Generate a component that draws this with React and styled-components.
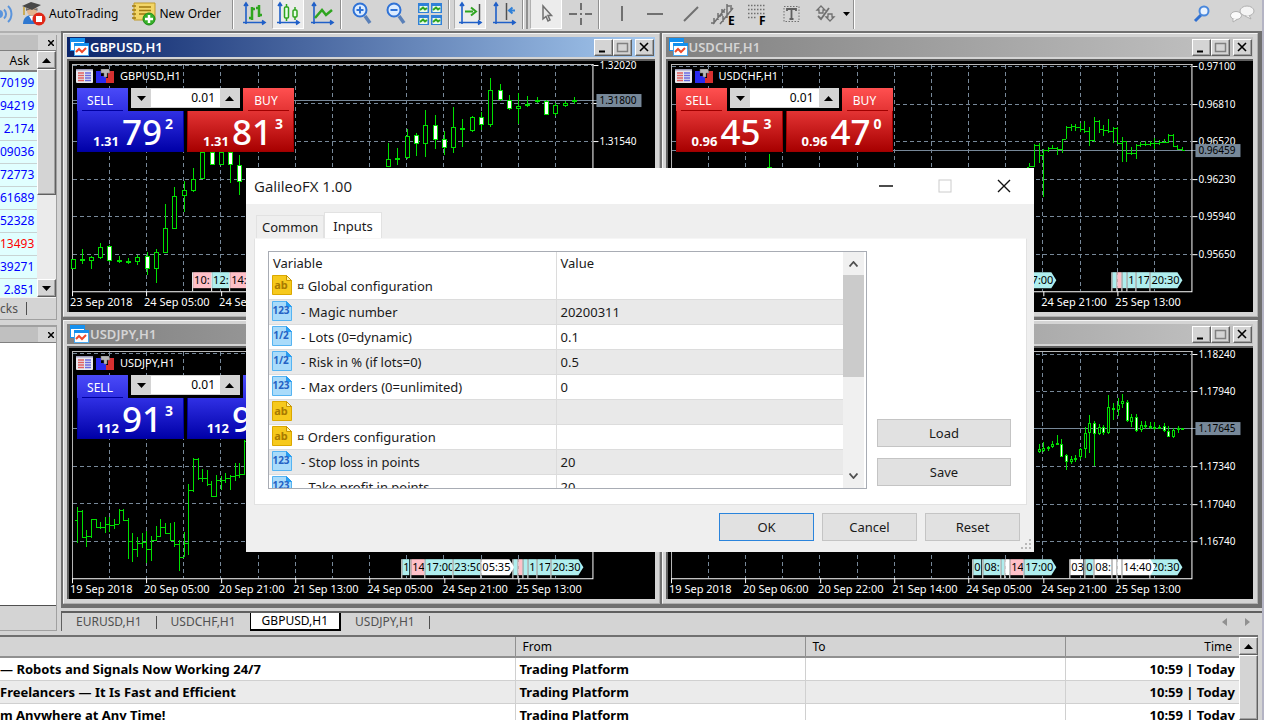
import React, { useState } from 'react';
import styled, { createGlobalStyle, css } from 'styled-components';

const UP = 'up';
const CYAN = '#afeeee';
const PINK = '#ffc0c8';
const WHITE = '#ffffff';

// [x, high, low, body top, body bottom, filled]
const GBPUSD_CANDLES = [
  [4, 198, 208, 198, 208, 0], [13, 188, 203, 198, 200, 0], [22, 195, 208, 196, 200, 0],
  [31, 182, 198, 186, 197, 0], [40, 184, 201, 185, 200, 1], [50, 195, 202, 199, 200, 0],
  [59, 197, 203, 200, 201, 0], [68, 194, 204, 196, 201, 0], [78, 191, 214, 195, 208, 1],
  [87, 188, 222, 191, 208, 0], [96, 143, 192, 167, 192, 0], [105, 126, 168, 135, 168, 0],
  [115, 120, 151, 129, 135, 0], [124, 107, 131, 118, 130, 0], [133, 91, 118, 91, 118, 0],
  [143, 91, 104, 91, 104, 1], [152, 91, 104, 91, 104, 0], [161, 91, 122, 91, 104, 1],
  [170, 94, 134, 104, 121, 1], [319, 82, 106, 98, 106, 0], [328, 87, 104, 97, 98, 0],
  [338, 68, 98, 75, 97, 0], [347, 72, 95, 74, 83, 1], [356, 49, 96, 64, 83, 0],
  [366, 54, 88, 64, 79, 1], [375, 70, 94, 78, 87, 1], [384, 46, 92, 66, 87, 0],
  [393, 58, 86, 67, 68, 0], [403, 55, 71, 56, 70, 0], [412, 51, 69, 56, 64, 1],
  [421, 17, 66, 29, 64, 0], [431, 23, 40, 29, 39, 1], [440, 34, 49, 39, 48, 1],
  [449, 32, 63, 45, 48, 0], [458, 35, 46, 43, 45, 0], [468, 36, 42, 39, 41, 0],
  [477, 39, 54, 40, 54, 1], [486, 42, 55, 44, 53, 0], [496, 40, 46, 42, 45, 0],
  [505, 36, 43, 39, 40, 0],
];

const EURUSD_CANDLES = [
  [371, 96, 105, 101, 104, 0], [375, 94, 104, 100, 103, 0], [380, 98, 103, 99, 101, 0],
  [384, 93, 100, 96, 99, 0], [389, 87, 97, 95, 96, 0], [393, 91, 109, 96, 109, 1],
  [398, 106, 122, 107, 114, 1], [403, 108, 116, 111, 114, 0], [407, 107, 114, 110, 112, 0],
  [412, 100, 111, 101, 109, 0], [417, 79, 110, 85, 101, 0], [421, 67, 105, 75, 85, 0],
  [426, 73, 118, 75, 86, 1], [431, 76, 87, 79, 86, 0], [435, 77, 87, 79, 85, 1],
  [440, 47, 86, 59, 85, 0], [445, 55, 72, 60, 62, 0], [450, 50, 68, 57, 62, 0],
  [454, 46, 60, 53, 56, 0], [459, 52, 74, 54, 73, 1], [463, 66, 79, 69, 74, 0],
  [468, 66, 84, 69, 83, 1], [473, 73, 84, 77, 82, 0], [477, 73, 81, 77, 79, 0],
  [482, 74, 81, 78, 79, 0], [486, 74, 82, 79, 80, 0], [491, 77, 81, 79, 80, 0],
  [496, 75, 84, 78, 83, 1], [500, 78, 89, 83, 89, 1], [505, 80, 90, 82, 89, 0],
  [510, 78, 85, 80, 81, 0], [514, 80, 81, 80, 81, 0],
];

// [x, high, low, close]
const USDCHF_BARS = [
  [101, 93, 106, 106], [361, 102, 106, 105], [366, 83, 106, 84], [371, 82, 102, 94],
  [375, 88, 136, 89], [380, 86, 91, 87], [384, 84, 88, 87], [389, 86, 94, 88],
  [394, 78, 92, 78], [398, 65, 78, 66], [403, 63, 70, 65], [407, 63, 70, 66],
  [412, 62, 71, 68], [416, 60, 72, 70], [421, 66, 85, 79], [426, 56, 81, 60],
  [431, 59, 72, 68], [435, 64, 75, 69], [440, 58, 72, 70], [445, 66, 82, 67],
  [449, 66, 83, 82], [454, 76, 101, 80], [458, 80, 101, 92], [463, 86, 94, 92],
  [468, 83, 98, 84], [472, 81, 86, 83], [477, 80, 85, 83], [482, 80, 85, 82],
  [486, 77, 88, 82], [491, 79, 84, 81], [496, 78, 82, 81], [500, 73, 82, 74],
  [505, 73, 86, 85], [509, 84, 89, 88], [514, 86, 89, 89],
];

const USDJPY_BARS = [
  [8, 159, 195, 163], [13, 162, 190, 189], [17, 182, 199, 188], [22, 171, 190, 171],
  [27, 171, 180, 179], [31, 174, 181, 179], [36, 169, 185, 176], [40, 169, 184, 177],
  [45, 171, 181, 176], [50, 161, 176, 162], [54, 161, 173, 172], [59, 170, 211, 193],
  [63, 185, 214, 201], [68, 189, 209, 195], [73, 185, 200, 194], [77, 183, 215, 201],
  [82, 188, 213, 192], [87, 178, 193, 188], [91, 171, 189, 179], [96, 175, 185, 185],
  [101, 175, 193, 192], [105, 174, 199, 196], [110, 192, 223, 209], [115, 184, 209, 195],
  [119, 136, 207, 142], [124, 110, 144, 111], [129, 110, 132, 130], [133, 121, 134, 130],
  [138, 122, 138, 136], [142, 133, 149, 148], [147, 127, 149, 132], [152, 128, 142, 132],
  [156, 125, 135, 130], [161, 127, 142, 128], [166, 115, 133, 127], [170, 115, 130, 126],
  [175, 92, 127, 93],
];

// [from, to, text, colour, pointed]
const TAIL_FLAGS = [
  [444, 448, '', CYAN], [449, 453, '', PINK], [454, 458, '', CYAN],
  [459, 467, '1', CYAN], [468, 481, '17', CYAN], [482, 514, '20:30', CYAN, true],
];

const CHARTS = [
  {
    symbol: 'GBPUSD,H1',
    active: true,
    sell: { tone: 'blue', base: '1.31', big: '79', pip: '2' },
    buy: { tone: 'red', base: '1.31', big: '81', pip: '3' },
    candles: GBPUSD_CANDLES,
    candleWidth: 5,
    levels: [4, 42, 80, 118, 155, 193],
    prices: ['1.32020', '1.31780', '1.31540', '', '', ''],
    last: { y: 39, text: '1.31800' },
    dates: ['23 Sep 2018', '24 Sep 05:00', '24 Sep 21:00'],
    flags: [
      [124, 142, '10:', PINK], [143, 160, '12:', CYAN], [161, 180, '14:', PINK],
    ],
  },
  {
    symbol: 'USDCHF,H1',
    sell: { tone: 'red', base: '0.96', big: '45', pip: '3' },
    buy: { tone: 'red', base: '0.96', big: '47', pip: '0' },
    bars: USDCHF_BARS,
    levels: [5, 43, 80, 118, 155, 193],
    prices: ['0.97100', '0.96810', '0.96520', '0.96230', '0.95940', '0.95650'],
    last: { y: 89, text: '0.96459' },
    dates: ['', '', '', '', '', '24 Sep 21:00', '25 Sep 13:00'],
    flags: [[356, 388, '17:00', CYAN, true], ...TAIL_FLAGS],
  },
  {
    symbol: 'USDJPY,H1',
    sell: { tone: 'blue', base: '112', big: '91', pip: '3' },
    buy: { tone: 'blue', base: '112', big: '93', pip: '1' },
    bars: USDJPY_BARS,
    levels: [5, 80, 118, 155, 193],
    prices: [],
    dates: ['19 Sep 2018', '20 Sep 05:00', '20 Sep 21:00', '21 Sep 13:00', '24 Sep 05:00', '24 Sep 21:00', '25 Sep 13:00'],
    flags: [
      [333, 340, '1', CYAN], [342, 355, '14', PINK], [356, 383, '17:00', CYAN],
      [384, 411, '23:50', CYAN], [412, 445, '05:35', WHITE, true], ...TAIL_FLAGS,
    ],
  },
  {
    symbol: 'EURUSD,H1',
    sell: { tone: 'blue', base: '1.17', big: '64', pip: '5' },
    buy: { tone: 'blue', base: '1.17', big: '66', pip: '2' },
    candles: EURUSD_CANDLES,
    candleWidth: 3,
    levels: [6, 43, 118, 156, 193],
    prices: ['1.18240', '1.17940', '1.17340', '1.17040', '1.16740'],
    last: { y: 80, text: '1.17645' },
    dates: ['19 Sep 2018', '20 Sep 06:00', '20 Sep 22:00', '21 Sep 14:00', '24 Sep 05:00', '24 Sep 21:00', '25 Sep 13:00'],
    flags: [
      [305, 313, '0', CYAN], [315, 332, '08:', CYAN], [333, 336, '', CYAN], [337, 341, '', WHITE],
      [342, 355, '14', PINK], [356, 388, '17:00', CYAN, true], [402, 415, '03', WHITE],
      [417, 425, '0', CYAN], [426, 443, '08:', WHITE], [444, 448, '', WHITE], [449, 453, '', WHITE],
      [482, 514, '20:30', CYAN, true], [454, 487, '14:40', WHITE, true],
    ],
  },
];

const ASKS = ['70199', '94219', '2.174', '09036', '72773', '61689', '52328', '13493', '39271', '2.851'];

const INPUTS = [
  { type: 'ab', name: '¤ Global configuration', value: '', section: true },
  { type: '123', name: '- Magic number', value: '20200311' },
  { type: '1/2', name: '- Lots (0=dynamic)', value: '0.1' },
  { type: '1/2', name: '- Risk in % (if lots=0)', value: '0.5' },
  { type: '123', name: '- Max orders (0=unlimited)', value: '0' },
  { type: 'ab', name: '', value: '', section: true },
  { type: 'ab', name: '¤ Orders configuration', value: '', section: true },
  { type: '123', name: '- Stop loss in points', value: '20' },
  { type: '123', name: '- Take profit in points', value: '20' },
];

const NEWS = [
  '— Robots and Signals Now Working 24/7',
  'Freelancers — It Is Fast and Efficient',
  'm Anywhere at Any Time!',
];

const GRID_X = Array.from({ length: 13 }, (_, i) => Math.round(40 + i * 37.15));

const Flag = ({ from, to, text, color, pointed }) => {
  const end = pointed ? to - 5 : to;
  const shape = pointed
    ? `M${from} 211H${end}L${to} 219L${end} 227H${from}Z`
    : `M${from} 211H${to}V227H${from}Z`;
  return (
    <g>
      <path d={shape} fill={color} />
      <path d={`M${from - 0.5} 211V230`} stroke="#fff" />
      {text && <text x={from + 1} y="223" fontSize="11" fill="#000">{text}</text>}
    </g>
  );
};

const Plot = ({ chart }) => {
  const { candles, candleWidth, bars, levels, prices, last, dates, flags } = chart;
  return (
    <PlotSvg viewBox="0 0 585 251" role="img" aria-label={`${chart.symbol} chart`}>
      <g stroke="#778899" strokeDasharray="4 3" shapeRendering="crispEdges">
        {GRID_X.map((x) => <path key={x} d={`M${x + 0.5} 4V230`} />)}
        {levels.map((y) => <path key={y} d={`M4 ${y + 0.5}H523`} />)}
      </g>
      {last && <path d={`M4 ${last.y + 0.5}H530`} stroke="#778899" />}
      <path d="M3.500 230V3.500H524" fill="none" stroke="#b8b8b8" />
      <path d="M3 230.500H523.500V3" fill="none" stroke="#fff" />
      <g stroke="#00e000" shapeRendering="crispEdges">
        {candles && candles.map(([x, high, low, top, bottom, filled]) => (
          <g key={x}>
            <path d={`M${x + 0.5} ${high}V${low}`} />
            <rect
              x={x + 0.5 - (candleWidth - 1) / 2}
              y={top + 0.5}
              width={candleWidth - 1}
              height={Math.max(bottom - top - 1, 1)}
              fill={filled ? '#fff' : '#000'}
            />
          </g>
        ))}
        {bars && bars.map(([x, high, low, close], i) => {
          const open = i ? bars[i - 1][3] : close + 9;
          const from = Math.min(Math.max(open, high), low);
          return <path key={x} d={`M${x + 0.5} ${high}V${low}M${x - 2} ${from}H${x}M${x} ${close}H${x + 3}`} />;
        })}
      </g>
      {flags.map(([from, to, text, color, pointed]) => (
        <Flag key={from} from={from} to={to} text={text} color={color} pointed={pointed} />
      ))}
      <g fill="#fff" fontSize="10">
        {levels.map((y, i) => prices[i] && (
          <g key={y}>
            <path d={`M524 ${y + 0.5}h5`} stroke="#fff" />
            <text x="530" y={y + 4}>{prices[i]}</text>
          </g>
        ))}
      </g>
      {last && (
        <g fontSize="10">
          <rect x="527" y={last.y - 6} width="45" height="13" fill="#778899" />
          <text x="530" y={last.y + 4} fill="#000">{last.text}</text>
        </g>
      )}
      <g fill="#fff" fontSize="11">
        {dates.map((date, i) => date && (
          <g key={date}>
            <path d={`M${Math.round(3 + i * 74.3) + 0.5} 230v5`} stroke="#fff" />
            <text x={Math.round(1 + i * 74.3)} y="245">{date}</text>
          </g>
        ))}
      </g>
    </PlotSvg>
  );
};

const ChartLogo = () => (
  <svg width="19" height="19" viewBox="0 0 19 19">
    <rect x="0.5" y="0.5" width="14" height="12" fill="#fff" stroke="#1590ee" />
    <path d="M0 2H15" stroke="#1590ee" strokeWidth="4" />
    <rect x="4.5" y="5.5" width="14" height="12" fill="#fff" stroke="#4aa8f0" />
    <path d="M4 6.500H19" stroke="#1590ee" strokeWidth="3" />
    <path d="M6 14L9 11L12 14L16 10" fill="none" stroke="#ef4a2c" strokeWidth="2" />
  </svg>
);

const DepthIcon = () => (
  <svg width="17" height="14" viewBox="0 0 17 14">
    <rect width="17" height="14" rx="1" fill="#e8e8ee" />
    <path d="M0 0.500H17" stroke="#9a9ab8" strokeWidth="2" />
    <path d="M2 4H8M2 6.500H8M2 9H8M2 11.500H8" stroke="#e06060" strokeWidth="1.500" />
    <path d="M9 4H15M9 6.500H15M9 9H15M9 11.500H15" stroke="#6a6ae0" strokeWidth="1.500" />
  </svg>
);

const TradeIcon = () => (
  <svg width="18" height="14" viewBox="0 0 18 14">
    <path d="M0 2H5V7H10V14H0Z" fill="#2a2af0" />
    <path d="M12 2H18V14H10V9H12Z" fill="#d83030" />
    <path d="M5 0H13L14 4H11V8H8V4H5Z" fill="#b8b8b8" stroke="#707070" strokeWidth="0.500" />
  </svg>
);

const Caption = ({ symbol }) => (
  <WindowButtons>
    <CaptionButton aria-label={`Minimize ${symbol}`}>
      <svg width="17" height="15"><path d="M4 11.500H10" stroke="#000" strokeWidth="2" /></svg>
    </CaptionButton>
    <CaptionButton aria-label={`Maximize ${symbol}`}>
      <svg width="17" height="15"><path d="M3 3.500H14M3.500 3V11.500H13.500V3" fill="none" stroke="#808080" strokeWidth="1.500" /></svg>
    </CaptionButton>
    <CaptionButton $apart aria-label={`Close ${symbol}`}>
      <svg width="17" height="15"><path d="M4 3L12 11M12 3L4 11" stroke="#000" strokeWidth="1.600" /></svg>
    </CaptionButton>
  </WindowButtons>
);

const Arrow = ({ dir }) => (
  <svg width="9" height="5" viewBox="0 0 9 5">
    <path d={dir === UP ? 'M0 5L4.500 0L9 5Z' : 'M0 0L4.500 5L9 0Z'} fill="#000" />
  </svg>
);

const QuickTrade = ({ symbol, sell, buy }) => {
  const [lots, setLots] = useState('0.01');
  return (
    <TradePanel>
      <TradeTop>
        <SideButton $tone={sell.tone}>SELL</SideButton>
        <Stepper>
          <StepButton aria-label="Less"><Arrow /></StepButton>
          <LotsInput aria-label={`${symbol} volume`} value={lots} onChange={(e) => setLots(e.target.value)} />
          <StepButton aria-label="More"><Arrow dir={UP} /></StepButton>
        </Stepper>
        <SideButton $tone={buy.tone}>BUY</SideButton>
      </TradeTop>
      <TradePrices>
        {[sell, buy].map((side, i) => (
          <PriceBox key={i} $tone={side.tone}>
            <BasePrice>{side.base}</BasePrice>
            <BigPrice>{side.big}</BigPrice>
            <PipPrice>{side.pip}</PipPrice>
          </PriceBox>
        ))}
      </TradePrices>
    </TradePanel>
  );
};

const ChartWindow = ({ chart }) => (
  <Window>
    <WindowTitle $active={chart.active}>
      <ChartLogo />
      <WindowName>{chart.symbol}</WindowName>
      <Caption symbol={chart.symbol} />
    </WindowTitle>
    <ChartArea>
      <Plot chart={chart} />
      <ChartHead>
        <DepthIcon />
        <TradeIcon />
        <ChartSymbol>{chart.symbol}</ChartSymbol>
      </ChartHead>
      <QuickTrade symbol={chart.symbol} sell={chart.sell} buy={chart.buy} />
    </ChartArea>
  </Window>
);

/* toolbar drawings, all on a 26x26 canvas */
const Axes = () => (
  <path d="M5 3V23M2 21.500H23M3 5L5 2L7 5M21 19.500L24 21.500L21 23.500" fill="none" stroke="#1f5fc8" strokeWidth="1.600" />
);

const TOOL_ICONS = {
  signals: (
    <g fill="none" stroke="#5a94dc" strokeWidth="2">
      <circle cx="12" cy="13" r="3" fill="#5a94dc" />
      <path d="M17 8.500A6 6 0 0 1 17 17.500M21 5A11 11 0 0 1 21 21" />
    </g>
  ),
  bars: (
    <g>
      <Axes />
      <path d="M11 6V19M8 17H11M11 8H14M18 4V16M15 7H18M18 14H21" stroke="#2fa51f" strokeWidth="2.500" />
    </g>
  ),
  candles: (
    <g>
      <Axes />
      <path d="M11.500 3V20M20 6V19" stroke="#2fa51f" strokeWidth="1.500" />
      <rect x="9.500" y="6" width="4" height="11" rx="1" fill="#eaffea" stroke="#2fa51f" strokeWidth="1.500" />
      <rect x="18" y="9" width="4" height="7" rx="1" fill="#eaffea" stroke="#2fa51f" strokeWidth="1.500" />
    </g>
  ),
  line: (
    <g>
      <Axes />
      <path d="M6 17L13 9L17 14L23 9" fill="none" stroke="#2fa51f" strokeWidth="2.500" />
    </g>
  ),
  zoomIn: (
    <g fill="none" stroke="#2f72d6">
      <circle cx="11" cy="9" r="6.500" fill="#dcecff" strokeWidth="2" />
      <path d="M16 15L21 22" stroke="#5a80b8" strokeWidth="3.500" />
      <path d="M7.500 9H14.500M11 5.500V12.500" strokeWidth="2" />
    </g>
  ),
  zoomOut: (
    <g fill="none" stroke="#2f72d6">
      <circle cx="11" cy="9" r="6.500" fill="#dcecff" strokeWidth="2" />
      <path d="M16 15L21 22" stroke="#5a80b8" strokeWidth="3.500" />
      <path d="M7.500 9H14.500" strokeWidth="2" />
    </g>
  ),
  tile: (
    <g>
      <path d="M1 2H12V12H1ZM14 2H25V12H14ZM1 14H12V24H1ZM14 14H25V24H14Z" fill="#2f80d8" />
      <path d="M2.500 5H10.500V11H2.500ZM15.500 5H23.500V11H15.500ZM2.500 17H10.500V23H2.500ZM15.500 17H23.500V23H15.500Z" fill="#eafaea" />
      <path d="M3 9L6 6.500L8 8.500L10 7M16 9L19 6.500L21 8.500L23 7M3 21L6 18.500L8 20.500L10 19M16 21L19 18.500L21 20.500L23 19" fill="none" stroke="#2fa51f" strokeWidth="2" />
    </g>
  ),
  autoScroll: (
    <g>
      <Axes />
      <path d="M22.500 3V19" stroke="#505050" strokeWidth="1.500" />
      <path d="M8 10.500H16M14 6.500L19 10.500L14 14.500" fill="none" stroke="#2fa51f" strokeWidth="2" />
    </g>
  ),
  shift: (
    <g>
      <Axes />
      <path d="M15.500 2V19" stroke="#505050" strokeWidth="1.500" />
      <path d="M24 9.500H19M21.500 6.500L18 9.500L21.500 12.500" fill="none" stroke="#2f80d8" strokeWidth="2" />
    </g>
  ),
  cursor: <path d="M10 5V18L13 15.500L15 20L17 19L15 14.500H18.500Z" fill="#e8e8e8" stroke="#707070" strokeWidth="1.500" />,
  cross: <path d="M14 2V9M14 12V14M14 17V24M2 13H10M13 13H15M18 13H25" stroke="#707070" strokeWidth="2" />,
  vline: <path d="M15 5V20" stroke="#707070" strokeWidth="2" />,
  hline: <path d="M6 13H22" stroke="#707070" strokeWidth="2" />,
  trend: <path d="M9 20L23 6" stroke="#707070" strokeWidth="2" />,
  equi: (
    <g>
      <path d="M4 23L16 8M11 23L24 7M5 17V23M9 12V19M13 8V15M18 3V12M14 15V21M18 10V17M22 4V10M2 22H5M9 15H12M13 11H16M18 5H21" stroke="#707070" strokeWidth="1.500" />
      <text x="19" y="24" fontSize="12" fontWeight="700" fill="#000">E</text>
    </g>
  ),
  fib: (
    <g>
      <path d="M5 4.500H22M5 8.500H22M5 12.500H22M5 16.500H14" stroke="#707070" strokeWidth="1.500" strokeDasharray="1.500 1.500" />
      <text x="16" y="24" fontSize="12" fontWeight="700" fill="#000">F</text>
    </g>
  ),
  text: (
    <g>
      <rect x="7" y="5.500" width="15" height="15" fill="none" stroke="#707070" strokeDasharray="1.500 1.500" />
      <path d="M10 10V8H19V10M14.500 8V18M12.500 18H16.500" fill="none" stroke="#606060" strokeWidth="1.800" />
    </g>
  ),
  arrows: (
    <g fill="none" stroke="#707070" strokeWidth="1.300">
      <path d="M10 5L14 9H12V12H8V9H6ZM19 20L23 16H21V13H17V16H15Z" />
      <path d="M7 15L10 18L18 7" strokeWidth="1.800" />
    </g>
  ),
};

const Tool = ({ icon, pressed, narrow }) => (
  <ToolButton $pressed={pressed} $narrow={narrow} aria-label={icon} aria-pressed={!!pressed}>
    <svg width="26" height="26" viewBox="0 0 26 26">{TOOL_ICONS[icon]}</svg>
  </ToolButton>
);

const RobotIcon = () => (
  <svg width="24" height="24" viewBox="0 0 24 24">
    <path d="M1 22C1 16 5 13 10 13S19 16 19 22Z" fill="#2f78d0" />
    <path d="M7 14L10 19L13 14Z" fill="#fff" />
    <circle cx="10" cy="9" r="5" fill="#e2b58e" />
    <path d="M0 4L9 0L19 3L10 8Z" fill="#484848" />
    <path d="M4 6V9C7 7 13 7 15.500 9V6L10 8Z" fill="#707070" />
    <path d="M2 5V13" stroke="#c8a030" strokeWidth="1.500" />
    <circle cx="17" cy="17" r="6.500" fill="#e02818" />
    <rect x="14" y="14" width="6" height="6" fill="#fff" />
  </svg>
);

const OrderIcon = () => (
  <svg width="24" height="24" viewBox="0 0 24 24">
    <path d="M2 1H23V18H2Z" fill="#f3d668" stroke="#c09a28" />
    <path d="M0 4H4M0 8H4M0 12H4M0 16H4" stroke="#a07a10" strokeWidth="1.500" />
    <path d="M7 5H19M7 8.500H19M7 12H14" stroke="#a07a10" strokeWidth="1.500" />
    <circle cx="17" cy="17" r="6" fill="#36b028" stroke="#1f8a18" />
    <path d="M13 17H21M17 13V21" stroke="#fff" strokeWidth="2.500" />
  </svg>
);

const Toolbar = () => (
  <ToolbarRow>
    <Tool icon="signals" narrow />
    <TextTool><RobotIcon />AutoTrading</TextTool>
    <TextTool $last><OrderIcon />New Order</TextTool>
    <ToolSeparator />
    <Tool icon="bars" />
    <Tool icon="candles" pressed />
    <Tool icon="line" />
    <ToolSeparator />
    <Tool icon="zoomIn" />
    <Tool icon="zoomOut" />
    <Tool icon="tile" />
    <ToolSeparator />
    <Tool icon="autoScroll" pressed />
    <Tool icon="shift" />
    <ToolSeparator $double />
    <Tool icon="cursor" pressed />
    <Tool icon="cross" />
    <ToolSeparator />
    <Tool icon="vline" />
    <Tool icon="hline" />
    <Tool icon="trend" />
    <Tool icon="equi" />
    <Tool icon="fib" />
    <Tool icon="text" />
    <Tool icon="arrows" />
    <Caret aria-label="More objects">
      <svg width="7" height="4"><path d="M0 0H7L3.500 4Z" /></svg>
    </Caret>
    <ToolSeparator />
    <ToolbarEnd>
      <Caret aria-label="Search">
        <svg width="18" height="18" viewBox="0 0 18 18">
          <path d="M2 16L8 10" stroke="#2f6fd0" strokeWidth="3" />
          <circle cx="11" cy="6" r="4.500" fill="#eaf3ff" stroke="#4a88dc" strokeWidth="2" />
        </svg>
      </Caret>
      <Caret aria-label="Chat">
        <svg width="26" height="18" viewBox="0 0 26 18">
          <ellipse cx="18" cy="6" rx="7" ry="5" fill="#f4f4f4" stroke="#b0b0b0" />
          <path d="M20 10L22 14L16 11" fill="#f4f4f4" stroke="#b0b0b0" />
          <ellipse cx="7" cy="10.500" rx="5.500" ry="4" fill="#fafafa" stroke="#b0b0b0" />
          <path d="M4 13.500V17L8 14.500" fill="#fafafa" stroke="#b0b0b0" />
        </svg>
      </Caret>
    </ToolbarEnd>
  </ToolbarRow>
);

const DockHeader = ({ label }) => (
  <DockTitle>
    <DockClose aria-label={`Close ${label}`}>
      <svg width="6" height="6"><path d="M0 0L6 6M6 0L0 6" stroke="#000" strokeWidth="1.500" /></svg>
    </DockClose>
  </DockTitle>
);

const MarketWatch = () => (
  <Dock>
    <DockHeader label="Market Watch" />
    <DockBody>
      <AskClip>
        <AskTable>
          <thead><tr><th>Ask</th></tr></thead>
          <tbody>
            {ASKS.map((ask) => (
              <tr key={ask}><AskCell $down={ask === '13493'}>{ask}</AskCell></tr>
            ))}
          </tbody>
        </AskTable>
      </AskClip>
      <ClassicScroll>
        <ScrollButton aria-label="Scroll up"><Arrow dir={UP} /></ScrollButton>
        <ScrollThumb />
        <ScrollRest />
        <ScrollButton aria-label="Scroll down"><Arrow /></ScrollButton>
      </ClassicScroll>
    </DockBody>
    <DockTabs><span>cks</span><TabBar /></DockTabs>
  </Dock>
);

const Navigator = () => (
  <Dock $fill>
    <DockHeader label="Navigator" />
    <NavigatorBody />
    <DockFoot />
  </Dock>
);

const ChartTabs = () => (
  <TabStrip>
    <ChartTab>EURUSD,H1</ChartTab>
    <TabBar />
    <ChartTab>USDCHF,H1</ChartTab>
    <ChartTab $active>GBPUSD,H1</ChartTab>
    <ChartTab>USDJPY,H1</ChartTab>
    <TabBar />
    <TabArrows>
      <svg width="5" height="8"><path d="M5 0V8L0 4Z" fill="#909090" /></svg>
      <svg width="5" height="8"><path d="M0 0V8L5 4Z" fill="#909090" /></svg>
    </TabArrows>
  </TabStrip>
);

const Mailbox = () => (
  <MailArea>
    <MailTable>
      <colgroup>
        <col />
        <FromCol />
        <ToCol />
        <TimeCol />
      </colgroup>
      <thead>
        <tr><th aria-label="Subject" /><th>From</th><th>To</th><th>Time</th></tr>
      </thead>
      <tbody>
        {NEWS.map((subject) => (
          <tr key={subject}>
            <td>{subject}</td>
            <td>Trading Platform</td>
            <td />
            <td>10:59 | Today</td>
          </tr>
        ))}
      </tbody>
    </MailTable>
    <ClassicScroll>
      <ScrollButton aria-label="Scroll up"><Arrow dir={UP} /></ScrollButton>
      <ScrollThumb />
    </ClassicScroll>
  </MailArea>
);

const TypeIcon = ({ type }) => {
  const gold = type === 'ab';
  return (
    <svg width="22" height="22" viewBox="0 0 22 22">
      <path
        d="M1.500 0.500H15.500L20.500 5.500V19.500H1.500Z"
        fill={gold ? '#f6c91c' : '#a9dbfa'}
        stroke={gold ? '#dba800' : '#55b4f2'}
      />
      <path d="M15.500 0.500V5.500H20.500Z" fill={gold ? '#fff0a0' : '#2a9df0'} stroke={gold ? '#c89600' : '#2a9df0'} />
      <text x="10" y={gold ? 14 : 13} fontSize={gold ? 11 : 10} fontWeight="700" textAnchor="middle" fill={gold ? '#a87a00' : '#2462c4'}>
        {type}
      </text>
    </svg>
  );
};

const InputsDialog = () => {
  const [tab, setTab] = useState('Inputs');
  return (
    <Overlay>
      <Dialog role="dialog" aria-labelledby="dialog-title">
        <DialogTitle>
          <h1 id="dialog-title">GalileoFX 1.00</h1>
          <DialogControl aria-label="Minimize">
            <svg width="14" height="14"><path d="M0 7H14" stroke="#111" strokeWidth="1.500" /></svg>
          </DialogControl>
          <DialogControl aria-label="Maximize" disabled>
            <svg width="14" height="14"><rect x="1" y="1" width="12" height="12" fill="none" stroke="#ccc" /></svg>
          </DialogControl>
          <DialogControl aria-label="Close">
            <svg width="14" height="14"><path d="M1 1L13 13M13 1L1 13" stroke="#111" strokeWidth="1.400" /></svg>
          </DialogControl>
        </DialogTitle>
        <DialogBody>
          <DialogTabs role="tablist">
            {['Common', 'Inputs'].map((name) => (
              <DialogTab key={name} role="tab" aria-selected={tab === name} $active={tab === name} onClick={() => setTab(name)}>
                {name}
              </DialogTab>
            ))}
          </DialogTabs>
          <DialogPanel>
            <ListBox>
              <InputTable>
                <colgroup><VariableCol /><col /></colgroup>
                <thead>
                  <tr><th>Variable</th><th>Value</th></tr>
                </thead>
                <tbody>
                  {INPUTS.map(({ type, name, value, section }, i) => (
                    <tr key={i}>
                      <td>
                        <VariableName $section={section}>
                          <TypeIcon type={type} />
                          <span>{name}</span>
                        </VariableName>
                      </td>
                      <td>{value}</td>
                    </tr>
                  ))}
                </tbody>
              </InputTable>
              <FlatScroll>
                <FlatArrow aria-label="Scroll up">
                  <svg width="9" height="6"><path d="M0.500 5.500L4.500 1L8.500 5.500" fill="none" stroke="#505050" strokeWidth="1.800" /></svg>
                </FlatArrow>
                <FlatThumb />
                <FlatArrow aria-label="Scroll down">
                  <svg width="9" height="6"><path d="M0.500 0.500L4.500 5L8.500 0.500" fill="none" stroke="#505050" strokeWidth="1.800" /></svg>
                </FlatArrow>
              </FlatScroll>
            </ListBox>
            <SideActions>
              <FlatButton>Load</FlatButton>
              <FlatButton>Save</FlatButton>
            </SideActions>
          </DialogPanel>
          <DialogFooter>
            <FooterButton $primary>OK</FooterButton>
            <FooterButton>Cancel</FooterButton>
            <FooterButton>Reset</FooterButton>
          </DialogFooter>
        </DialogBody>
        <Grip width="11" height="11" viewBox="0 0 11 11">
          <path d="M8 0H10V2H8ZM4 4H6V6H4ZM8 4H10V6H8ZM0 8H2V10H0ZM4 8H6V10H4ZM8 8H10V10H8Z" fill="#b8b8b8" />
        </Grip>
      </Dialog>
    </Overlay>
  );
};

const App = () => (
  <>
    <GlobalStyle />
    <Terminal>
      <Toolbar />
      <Main>
        <Docks>
          <MarketWatch />
          <Navigator />
        </Docks>
        <Desk>
          <Workspace>
            {CHARTS.map((chart) => <ChartWindow key={chart.symbol} chart={chart} />)}
          </Workspace>
          <ChartTabs />
        </Desk>
      </Main>
      <Mailbox />
    </Terminal>
    <InputsDialog />
  </>
);

const GlobalStyle = createGlobalStyle`
  * {
    box-sizing: border-box;
  }

  body {
    margin: 0;
    background: #fff;
    color: #000;
    font: 12px/16px "Noto Sans", "Open Sans", sans-serif;
    overflow: hidden;
  }

  button, input {
    font: inherit;
    color: inherit;
    border: 0;
    padding: 0;
    margin: 0;
    background: none;
    border-radius: 0;
  }

  svg {
    display: block;
    flex-shrink: 0;
  }
`;

const raised = css`
  background: #d4d4d4;
  border: 1px solid;
  border-color: #fff #606060 #606060 #fff;
  box-shadow: inset -1px -1px 0 #a0a0a0;
`;

const Terminal = styled.div`
  height: 100vh;
  margin-right: 16px;
  border-right: 2px solid #b4b4c4;
  background: #d4d4d4;
  display: flex;
  flex-direction: column;
  overflow: hidden;
`;

const ToolbarRow = styled.div`
  display: flex;
  align-items: center;
  gap: 2px;
  height: 31px;
  flex-shrink: 0;
  padding-bottom: 4px;
  overflow: hidden;
`;

const ToolButton = styled.button`
  width: ${({ $narrow }) => ($narrow ? '14px' : '32px')};
  height: 30px;
  display: flex;
  align-items: center;
  justify-content: ${({ $narrow }) => ($narrow ? 'flex-end' : 'center')};
  flex-shrink: 0;
  border: 1px solid transparent;
  ${({ $pressed }) => $pressed && css`
    background: #ececec;
    border-color: #b0b0b0 #fff #fff #b0b0b0;
  `}
`;

const TextTool = styled.button`
  display: flex;
  align-items: center;
  gap: 3px;
  padding: 0 6px;
  margin-right: ${({ $last }) => ($last ? '3px' : '0')};
  height: 28px;
  white-space: nowrap;
`;

const ToolSeparator = styled.div`
  width: ${({ $double }) => ($double ? '6px' : '4px')};
  height: 30px;
  flex-shrink: 0;
  border-left: 1px solid #909090;
  border-right: ${({ $double }) => ($double ? '2px solid #909090' : '0')};
  box-shadow: inset 1px 0 0 #fff;
`;

const Caret = styled.button`
  display: flex;
  align-items: center;
  justify-content: center;
  padding: 0 1px;
`;

const ToolbarEnd = styled.div`
  display: flex;
  gap: 16px;
  margin-left: auto;
  padding-right: 6px;
`;

const Main = styled.div`
  display: grid;
  grid-template-columns: 61px minmax(0, 1fr);
  flex-shrink: 0;
`;

const Docks = styled.div`
  display: flex;
  flex-direction: column;
  gap: 5px;
  padding-top: 2px;
  border-top: 2px solid #b0b0b0;
  padding-right: 4px;
`;

const Dock = styled.section`
  display: flex;
  flex-direction: column;
  border-right: 1px solid #a0a0a0;
  border-bottom: 1px solid #a0a0a0;
  ${({ $fill }) => $fill && 'flex: 1; border-top: 2px solid #a0a0a0;'}
`;

const DockTitle = styled.div`
  height: 15px;
  background: linear-gradient(90deg, #c0c0c0 38px, #d4d4d4 38px);
  display: flex;
  align-items: center;
  justify-content: flex-end;
`;

const DockClose = styled.button`
  width: 8px;
  height: 12px;
`;

const DockBody = styled.div`
  display: flex;
  height: 247px;
  border-top: 1px solid #808080;
`;

const AskClip = styled.div`
  flex: 1;
  min-width: 0;
  overflow: hidden;
`;

const AskTable = styled.table`
  width: 100%;
  border-collapse: collapse;

  th {
    height: 20px;
    padding: 0 10px 0 0;
    background: #d4d4d4;
    border-bottom: 2px solid #808080;
    font-weight: 400;
    text-align: right;
  }
`;

const AskCell = styled.td`
  height: 23px;
  padding: 0 5px 0 0;
  background: #e0ffff;
  border-bottom: 1px solid #c8d4d4;
  text-align: right;
  color: ${({ $down }) => ($down ? '#ff0000' : '#0000ff')};
`;

const ClassicScroll = styled.div`
  width: 19px;
  flex-shrink: 0;
  display: flex;
  flex-direction: column;
  background: #ebebeb;
`;

const ScrollButton = styled.button`
  ${raised}
  height: 18px;
  display: flex;
  align-items: center;
  justify-content: center;
  flex-shrink: 0;
`;

const ScrollThumb = styled.div`
  ${raised}
  flex: 126;
`;

const ScrollRest = styled.div`
  flex: 85;
`;

const DockTabs = styled.div`
  height: 22px;
  display: flex;
  align-items: center;
  gap: 8px;
  color: #505050;
  border-top: 1px solid #f4f4f4;
`;

const TabBar = styled.span`
  width: 1px;
  height: 13px;
  background: #505050;
`;

const NavigatorBody = styled.div`
  flex: 1;
  background: #fff;
  border-top: 1px solid #808080;
  border-bottom: 1px solid #505050;
`;

const DockFoot = styled.div`
  height: 24px;
`;

const Desk = styled.div`
  display: flex;
  flex-direction: column;
  min-width: 0;
`;

const Workspace = styled.div`
  display: grid;
  grid-template-columns: 1fr 1fr;
  gap: 3px 2px;
  padding: 2px 4px 4px 2px;
  background: #707070;
`;

const Window = styled.section`
  background: #d4d4d4;
  border: 1px solid;
  border-color: #f4f4f4 #b0b0b0 #b0b0b0 #f4f4f4;
  padding: 3px 4px 4px 3px;
  min-width: 0;
`;

const WindowTitle = styled.header`
  display: flex;
  align-items: center;
  gap: 1px;
  height: 20px;
  padding: 0 1px 0 3px;
  color: ${({ $active }) => ($active ? '#fff' : '#d4d4d4')};
  background: ${({ $active }) => ($active
    ? 'linear-gradient(90deg, #0a246a, #a6caf0)'
    : 'linear-gradient(90deg, #808080, #c4c4c4)')};
`;

const WindowName = styled.h2`
  margin: 0;
  font-size: 13px;
  font-weight: 600;
`;

const WindowButtons = styled.div`
  display: flex;
  margin-left: auto;
`;

const CaptionButton = styled.button`
  ${raised}
  width: 19px;
  height: 17px;
  margin-left: ${({ $apart }) => ($apart ? '3px' : '0')};
`;

const ChartArea = styled.div`
  position: relative;
  margin-top: 2px;
  background: #000;
  border: 2px solid #606060;
  border-width: 2px 0 0 2px;
`;

const PlotSvg = styled.svg`
  width: 100%;
  height: auto;
`;

const ChartHead = styled.div`
  position: absolute;
  top: 7px;
  left: 7px;
  display: flex;
  align-items: center;
  gap: 3px;
  color: #fff;
`;

const ChartSymbol = styled.span`
  padding-left: 3px;
  font-size: 11px;
`;

const TradePanel = styled.div`
  position: absolute;
  top: 27px;
  left: 8px;
  width: 217px;
  background: #000;
`;

const tones = {
  blue: { top: '#4a4af8', mid: '#3030e4', bottom: '#0000a8', line: '#0000a0' },
  red: { top: '#ff5050', mid: '#e43434', bottom: '#a80000', line: '#a00000' },
};

const TradeTop = styled.div`
  display: flex;
  justify-content: space-between;
  height: 23px;
`;

const SideButton = styled.button`
  width: 51px;
  padding: 2px 5px 0 0;
  color: #fff;
  background:
    linear-gradient(${({ $tone }) => `${tones[$tone].line}, ${tones[$tone].line}`}) center bottom / 41px 1px no-repeat,
    linear-gradient(${({ $tone }) => `${tones[$tone].top}, ${tones[$tone].mid}`});
`;

const Stepper = styled.div`
  display: flex;
  width: 109px;
  height: 20px;
  border: 1px solid #d4d4d4;
  background: #fff;
`;

const StepButton = styled.button`
  width: 19px;
  display: flex;
  align-items: center;
  justify-content: center;
  background: #d4d4d4;
`;

const LotsInput = styled.input`
  flex: 1;
  min-width: 0;
  padding-right: 5px;
  text-align: right;
  color: #000;
`;

const TradePrices = styled.div`
  display: grid;
  grid-template-columns: 1fr 1fr;
  gap: 3px;
`;

const PriceBox = styled.div`
  height: 41px;
  display: flex;
  justify-content: flex-end;
  gap: 3px;
  padding-right: 10px;
  color: #fff;
  font-weight: 700;
  background: linear-gradient(${({ $tone }) => `${tones[$tone].mid}, ${tones[$tone].bottom}`});
  border: 1px solid ${({ $tone }) => tones[$tone].line};
  border-top: 0;
`;

const BasePrice = styled.span`
  align-self: flex-end;
  font-size: 13px;
  line-height: 20px;
`;

const BigPrice = styled.span`
  font-size: 35px;
  line-height: 42px;
  font-weight: 500;
`;

const PipPrice = styled.span`
  font-size: 14px;
  line-height: 26px;
`;

const TabStrip = styled.nav`
  display: flex;
  align-items: center;
  flex: 1;
  height: 22px;
  border-top: 2px solid #606060;
  border-left: 1px solid #606060;
  box-shadow: 0 -2px 0 #d4d4d4;
  margin-top: 3px;
`;

const ChartTab = styled.button`
  align-self: stretch;
  padding: 0 14px;
  color: #505050;
  ${({ $active }) => $active && css`
    padding: 0 11px;
    color: #000;
    background: #fff;
    border: solid #000;
    border-width: 0 2px 2px 1px;
  `}
`;

const TabArrows = styled.div`
  display: flex;
  gap: 18px;
  margin-left: auto;
  padding-right: 12px;
`;

const MailArea = styled.div`
  display: flex;
  align-items: stretch;
  flex: 1;
  min-height: 0;
  margin: 4px 4px 0 0;
  border-top: 2px solid #707070;
  overflow: hidden;
`;

const MailTable = styled.table`
  flex: 1;
  table-layout: fixed;
  border-collapse: collapse;
  align-self: flex-start;

  th {
    height: 20px;
    padding: 0 7px;
    font-weight: 400;
    text-align: left;
    border-right: 1px solid #909090;
    border-bottom: 2px solid #909090;
  }

  td {
    height: 23px;
    padding: 0 4px;
    background: #fff;
    font-size: 13px;
    font-weight: 700;
    white-space: nowrap;
    border-right: 1px solid #d0d0d0;
    border-bottom: 1px solid #d0d0d0;
  }

  td:first-child {
    padding: 0;
  }

  th:last-child, td:last-child {
    text-align: right;
    border-right: 0;
  }

  tr:nth-child(even) td {
    background: #ebebeb;
  }
`;

const FromCol = styled.col`
  width: 290px;
`;

const ToCol = styled.col`
  width: 260px;
`;

const TimeCol = styled.col`
  width: 174px;
`;

const Overlay = styled.div`
  position: fixed;
  inset: 0;
  display: flex;
  align-items: center;
  justify-content: center;
`;

const Dialog = styled.div`
  position: relative;
  width: 788px;
  max-width: 100%;
  background: #efefef;
  font-size: 13px;
  line-height: 20px;
  color: #1a1a1a;
`;

const DialogTitle = styled.header`
  display: flex;
  align-items: center;
  height: 36px;
  padding: 0 1px 0 8px;
  background: #fff;

  h1 {
    flex: 1;
    margin: 0;
    font: 400 15px/20px "Open Sans", sans-serif;
  }
`;

const DialogControl = styled.button`
  width: 59px;
  height: 36px;
  display: flex;
  align-items: center;
  justify-content: center;
`;

const DialogBody = styled.div`
  padding: 8px 7px 11px 8px;
`;

const DialogTabs = styled.div`
  display: flex;
  align-items: flex-end;
  padding-left: 2px;
`;

const DialogTab = styled.button`
  height: ${({ $active }) => ($active ? '26px' : '23px')};
  padding: ${({ $active }) => ($active ? '0 8px' : '0 5px')};
  border: 1px solid #e2e2e2;
  border-bottom: 0;
  background: ${({ $active }) => ($active ? '#fff' : 'transparent')};
`;

const DialogPanel = styled.div`
  display: flex;
  gap: 10px;
  padding: 12px 15px 15px 13px;
  background: #fff;
  border: 1px solid #e2e2e2;
  border-top-color: #f6f6f6;
`;

const ListBox = styled.div`
  flex: 1;
  display: flex;
  height: 238px;
  overflow: hidden;
  border: 1px solid #a8acb4;
`;

const InputTable = styled.table`
  flex: 1;
  table-layout: fixed;
  border-collapse: collapse;
  align-self: flex-start;

  th {
    height: 22px;
    padding: 0 4px;
    font-weight: 400;
    text-align: left;
  }

  td {
    height: 25px;
    padding: 0 4px;
    border-bottom: 1px solid #dcdcdc;
  }

  td:first-child {
    padding: 0 0 0 2px;
  }

  th:first-child, td:first-child {
    border-right: 1px solid #dcdcdc;
  }

  tr:nth-child(even) td {
    background: #e9e9e9;
  }
`;

const VariableCol = styled.col`
  width: 50%;
`;

const VariableName = styled.div`
  display: flex;
  align-items: center;
  gap: ${({ $section }) => ($section ? '4px' : '8px')};
`;

const FlatScroll = styled.div`
  width: 23px;
  padding: 1px 2px 1px 0;
  display: flex;
  flex-direction: column;
  background: linear-gradient(90deg, #f0f0f0 21px, #fff 21px);
`;

const FlatArrow = styled.button`
  height: 22px;
  display: flex;
  align-items: center;
  justify-content: center;

  &:last-child {
    margin-top: auto;
  }
`;

const FlatThumb = styled.div`
  height: 102px;
  background: #cbcbcb;
`;

const SideActions = styled.div`
  width: 134px;
  display: flex;
  flex-direction: column;
  justify-content: flex-end;
  gap: 11px;
  padding-bottom: 3px;
`;

const FlatButton = styled.button`
  height: 28px;
  background: #e1e1e1;
  border: 1px solid #c4c4c4;
`;

const DialogFooter = styled.footer`
  display: flex;
  justify-content: flex-end;
  gap: 8px;
  padding: 8px 7px 0 0;
`;

const FooterButton = styled(FlatButton)`
  width: 95px;
  border-color: ${({ $primary }) => ($primary ? '#2a84dc' : '#c4c4c4')};
`;

const Grip = styled.svg`
  position: absolute;
  right: 2px;
  bottom: 2px;
`;

export default App;
